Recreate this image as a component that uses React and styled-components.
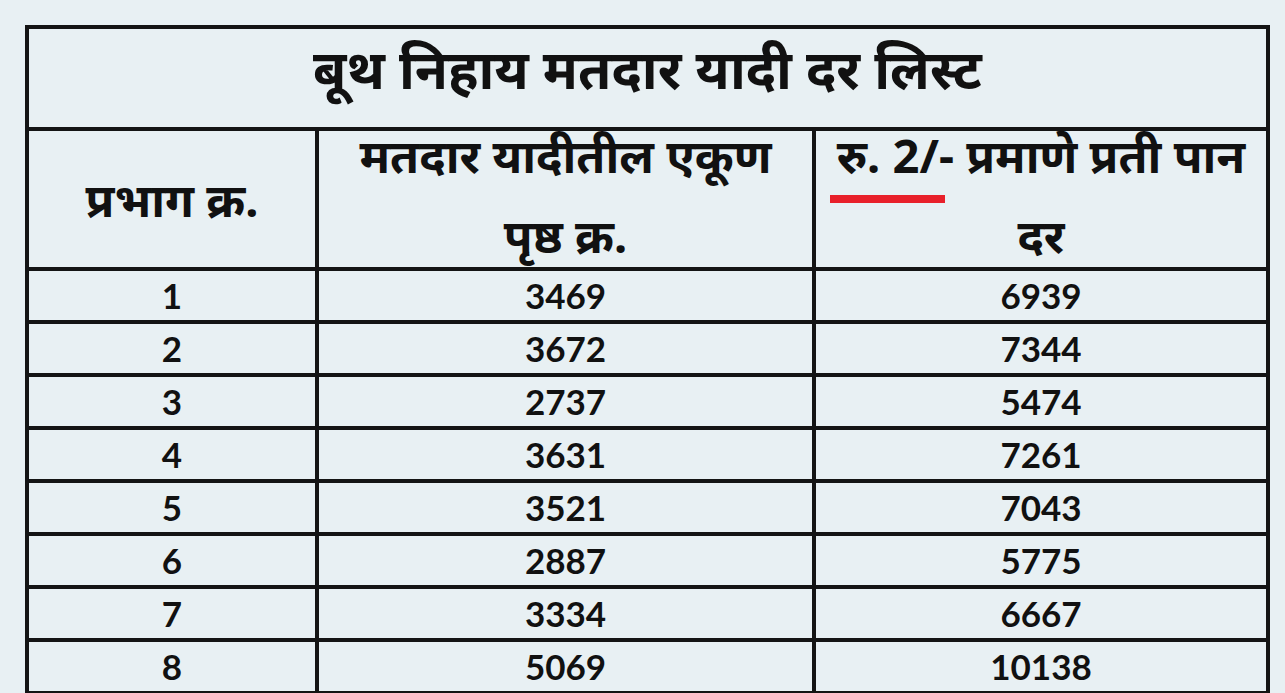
import React from 'react';
import styled, { createGlobalStyle } from 'styled-components';

const rows = [
  [1, 3469, 6939],
  [2, 3672, 7344],
  [3, 2737, 5474],
  [4, 3631, 7261],
  [5, 3521, 7043],
  [6, 2887, 5775],
  [7, 3334, 6667],
  [8, 5069, 10138],
];

export default function App() {
  return (
    <>
      <GlobalStyle />
      <Page>
        <Table>
          <colgroup>
            <col style={{ width: 290 }} />
            <col style={{ width: 497 }} />
            <col />
          </colgroup>
          <thead>
            <tr>
              <TitleCell colSpan={3}>बूथ निहाय मतदार यादी दर लिस्ट</TitleCell>
            </tr>
            <tr>
              <HeadCell>प्रभाग क्र.</HeadCell>
              <HeadCell>
                <HeadStack>
                  <HeadLine>मतदार यादीतील एकूण</HeadLine>
                  <Mark />
                  <HeadLine>पृष्ठ क्र.</HeadLine>
                </HeadStack>
              </HeadCell>
              <HeadCell>
                <HeadStack>
                  <HeadLine>रु. 2/- प्रमाणे प्रती पान</HeadLine>
                  <Mark $red />
                  <HeadLine>दर</HeadLine>
                </HeadStack>
              </HeadCell>
            </tr>
          </thead>
          <tbody>
            {rows.map(r => (
              <tr key={r[0]}>
                <NumCell>{r[0]}</NumCell>
                <NumCell>{r[1]}</NumCell>
                <NumCell>{r[2]}</NumCell>
              </tr>
            ))}
          </tbody>
        </Table>
      </Page>
    </>
  );
}

//* Styled Components

const GlobalStyle = createGlobalStyle`
  html, body {
    margin: 0;
    padding: 0;
    background: #e8f0f3;
    overflow: hidden;
  }
`;

const Page = styled.div`
  width: 1285px;
  height: 693px;
  padding: 25px 0 0 25px;
  box-sizing: border-box;
  background: #e8f0f3;
  overflow: hidden;
`;

const Table = styled.table`
  width: 1245px;
  border-collapse: collapse;
  table-layout: fixed;
  color: #111;
  font-family: "Noto Sans", Lato, sans-serif;

  td, th {
    border: 4px solid #141414;
    padding: 0;
    text-align: center;
    font-weight: 700;
  }
`;

const TitleCell = styled.th`
  height: 78px;
  font-size: 54px;
  line-height: 1;
  padding-bottom: 20px !important;
`;

const HeadCell = styled.th`
  height: 136px;
  font-size: 47px;
  vertical-align: middle;
  line-height: 1;
`;

const HeadStack = styled.div`
  display: flex;
  flex-direction: column;
  align-items: stretch;
  padding-bottom: 8px;
`;

const HeadLine = styled.div`
  height: 48px;
  line-height: 48px;
  white-space: nowrap;
`;

const Mark = styled.div`
  align-self: flex-start;
  width: 115px;
  height: 8px;
  margin: 16px 0 8px 14px;
  background: ${p => (p.$red ? '#e8202a' : 'transparent')};
`;

const NumCell = styled.td`
  height: 49px;
  font-family: Lato, "Open Sans", sans-serif;
  font-size: 35px;
  line-height: 1;
`;
